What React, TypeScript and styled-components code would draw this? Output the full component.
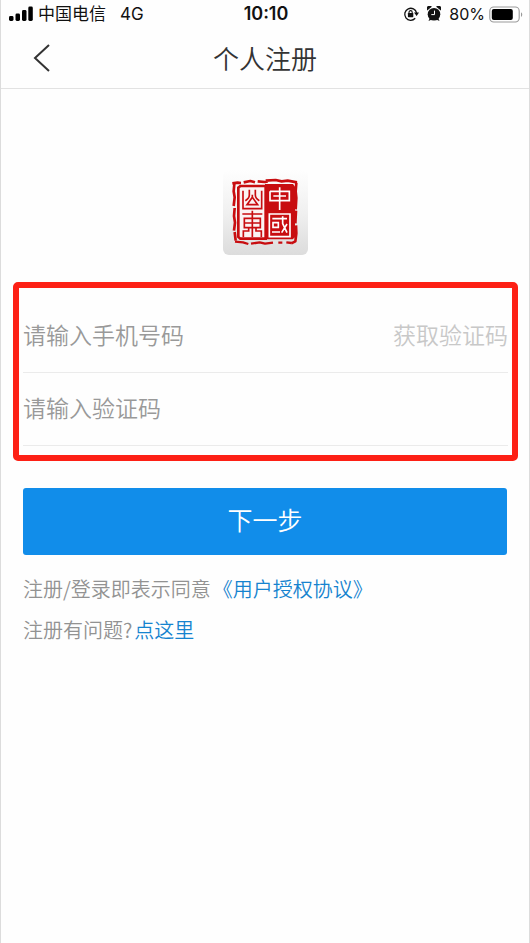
import React from "react";
import styled, { createGlobalStyle } from "styled-components";

const Global = createGlobalStyle`
  * { box-sizing: border-box; }
  body { margin: 0; background: #fff; font-family: "Noto Sans CJK SC", sans-serif; }
  button, input { font: inherit; }
`;

const Screen = styled.div`
  min-height: 100vh;
  background: #fefefe;
  border: solid #dcdcdc;
  border-width: 0 1px;
`;

const StatusBar = styled.div`
  display: grid;
  grid-template-columns: 1fr auto 1fr;
  align-items: center;
  height: 28px;
  padding: 0 6px 0 8px;
  color: #111;
  font-family: Inter, "Noto Sans CJK SC", sans-serif;
  font-size: 17px;
  line-height: 24px;
`;

const StatusGroup = styled.div<{ $end?: boolean }>`
  display: flex;
  align-items: center;
  justify-content: ${(p) => (p.$end ? "flex-end" : "flex-start")};
  gap: ${(p) => (p.$end ? "4px" : "5px")};
`;

const Network = styled.span`
  margin-left: 9px;
`;

const Percent = styled.span`
  font-size: 16px;
`;

const Clock = styled.time`
  font-size: 18px;
  font-weight: 600;
`;

const AlarmSvg = styled.svg`
  margin: 0 4px;
`;

const Header = styled.header`
  display: grid;
  grid-template-columns: 82px 1fr 82px;
  align-items: center;
  height: 61px;
  border-bottom: 1px solid #e2e2e2;
`;

const BackButton = styled.button`
  display: flex;
  justify-content: center;
  padding: 0;
  border: 0;
  background: none;
  color: #333;
`;

const Title = styled.h1`
  margin: 0;
  color: #333;
  font-size: 26px;
  font-weight: 350;
  line-height: 40px;
  text-align: center;
`;

const LogoArea = styled.div`
  display: flex;
  justify-content: center;
  padding: 81px 0 27px;
`;

const Fields = styled.div`
  margin: 0 11px 0 12px;
  padding: 12px 4px 9px;
  border: 6px solid #fd2015;
  border-radius: 5px;
`;

const FieldRow = styled.div`
  display: flex;
  align-items: center;
  height: 73px;
  padding-bottom: 5px;
  border-bottom: 1px solid #ebebeb;
  font-size: 23px;
  font-weight: 350;
`;

const TextInput = styled.input`
  flex: 1;
  min-width: 0;
  height: 40px;
  padding: 0;
  border: 0;
  outline: 0;
  background: none;
  color: #333;
  &::placeholder { color: #999; opacity: 1; }
`;

const CodeButton = styled.button`
  padding: 0;
  border: 0;
  background: none;
  color: #c8c8c8;
`;

const Actions = styled.div`
  padding: 27px 22px 0;
`;

const NextButton = styled.button`
  width: 100%;
  height: 67px;
  padding: 0 0 5px;
  border: 0;
  border-radius: 3px;
  background: #118dea;
  color: #fff;
  font-size: 25px;
  font-weight: 350;
`;

const Note = styled.p<{ $first?: boolean }>`
  margin: ${(p) => (p.$first ? "13px" : "0")} 0 0;
  color: #929292;
  font-size: 20px;
  font-weight: 350;
  line-height: 41px;
`;

const Link = styled.a`
  margin-left: 2px;
  color: #1583cf;
  text-decoration: none;
`;

const Signal = () => (
  <svg width="24" height="16" viewBox="0 0 24 16" fill="#000" aria-hidden="true">
    <rect x="0" y="10" width="4.5" height="5" rx="1.4" />
    <rect x="6.5" y="7.5" width="4.5" height="7.5" rx="1.4" />
    <rect x="13" y="4" width="4.5" height="11" rx="1.4" />
    <rect x="19.3" y="0.5" width="4.5" height="14.5" rx="1.4" />
  </svg>
);

const RotationLock = () => (
  <svg width="16" height="16" viewBox="0 0 16 16" fill="none" stroke="#111" aria-hidden="true">
    <path d="M12.2 12.3A6 6 0 1 1 13.6 7" strokeWidth="1.3" />
    <path d="M11 6.6h5l-2.4 3.4z" fill="#111" stroke="none" />
    <rect x="4.9" y="7" width="5.4" height="4.2" rx=".6" fill="#111" stroke="none" />
    <path d="M6 7.5V6.2a1.6 1.6 0 0 1 3.2 0v1.3" strokeWidth="1.1" />
  </svg>
);

const Alarm = () => (
  <AlarmSvg width="14" height="16" viewBox="0 0 14 16" aria-hidden="true">
    <circle cx="7" cy="8.2" r="6.3" fill="#111" />
    <path d="M.2 4.4A2.9 2.9 0 0 1 4.8.8zM13.8 4.4A2.9 2.9 0 0 0 9.2.8zM1.5 15l1.5-3.5 2.4 1.8zM12.5 15l-1.5-3.5-2.4 1.8z" fill="#111" />
    <path d="M7.5 4.6v4H4.3" fill="none" stroke="#fff" strokeWidth="1" />
  </AlarmSvg>
);

const Battery = () => (
  <svg width="34" height="17" viewBox="0 0 34 17" aria-hidden="true">
    <rect x=".8" y="1" width="29.4" height="15" rx="4" fill="none" stroke="#999" strokeWidth="1.1" />
    <rect x="2.8" y="3" width="21" height="11" rx="2" fill="#000" />
    <path d="M32 6.2c1.7.8 1.7 4 0 4.8z" fill="#999" />
  </svg>
);

const BackIcon = () => (
  <svg width="18" height="30" viewBox="0 0 18 30" fill="none" stroke="currentColor" strokeWidth="2" aria-hidden="true">
    <path d="M16 2L2 15l14 13" />
  </svg>
);

const SealLogo = () => (
  <svg width="85" height="85" viewBox="22 -2 255 255" role="img" aria-label="中国山东">
    <defs>
      <linearGradient id="tile" x1="0" y1="0" x2="0" y2="1">
        <stop offset="0" stopColor="#fefefe" />
        <stop offset=".5" stopColor="#f0f0f0" />
        <stop offset="1" stopColor="#dcdcdc" />
      </linearGradient>
    </defs>
    <rect x="22" y="-2" width="255" height="255" rx="18" fill="url(#tile)" />
    <g fill="none" stroke="#c80d10" strokeLinejoin="round">
      <path d="M50 38l16-2 10 1M84 35l20-4 14 4M126 32l22 2 8-2M150 30l30-2 18 4 18-2 28 5" strokeWidth="8" />
      <path d="M56 40l-2 22 3 18-3 26M57 112l-2 24 3 20-3 24M57 184l3 26" strokeWidth="8" />
      <path d="M242 36l-2 26 2 20-2 34M241 120l-2 38M241 164l1 24-3 24-12 6" strokeWidth="8" />
      <path d="M58 213l24 2 16 5M106 219l26-4 16 4 24-3M188 216l12 0M212 215l16 2" strokeWidth="7" />
    </g>
    <path d="M148 40h84l6 8v152l-7 6h-83z" fill="#c80d10" />
    <path d="M150 46H74l-6 5v148l6 5h76z" fill="#fbf3f3" stroke="#c80d10" strokeWidth="8" />
    <g fill="none" stroke="#c80d10" strokeWidth="5">
      <path d="M82 60v54h56V60M101 57v16q0 10-12 17M119 57v16q0 10 12 17M110 72v8l-16 22h32l-16-22" />
      <path d="M80 130h60M110 120v80M86 143h48v28H86zM86 157h48M99 171v10H83v18M121 171v10h16v18" />
    </g>
    <g fill="none" stroke="#fff" strokeWidth="5">
      <path d="M163 62v28h58V62h-58M192 50v68M173 76h38" />
      <path d="M161 130h62v68h-62zM170 144h44M172 156h16v14h-16zM169 184h24M201 137v22l13 27M214 160l-16 26" />
    </g>
  </svg>
);

export default function App() {
  return (
    <Screen>
      <Global />
      <StatusBar>
        <StatusGroup>
          <Signal />
          <span>中国电信</span>
          <Network>4G</Network>
        </StatusGroup>
        <Clock>10:10</Clock>
        <StatusGroup $end>
          <RotationLock />
          <Alarm />
          <Percent>80%</Percent>
          <Battery />
        </StatusGroup>
      </StatusBar>
      <Header>
        <BackButton type="button" aria-label="返回">
          <BackIcon />
        </BackButton>
        <Title>个人注册</Title>
      </Header>
      <main>
        <LogoArea>
          <SealLogo />
        </LogoArea>
        <form onSubmit={(e) => e.preventDefault()}>
          <Fields>
            <FieldRow>
              <TextInput type="tel" aria-label="手机号码" placeholder="请输入手机号码" />
              <CodeButton type="button">获取验证码</CodeButton>
            </FieldRow>
            <FieldRow>
              <TextInput type="text" aria-label="验证码" placeholder="请输入验证码" />
            </FieldRow>
          </Fields>
          <Actions>
            <NextButton type="submit">下一步</NextButton>
            <Note $first>
              注册/登录即表示同意<Link href="#agreement">《用户授权协议》</Link>
            </Note>
            <Note>
              注册有问题?<Link href="#help">点这里</Link>
            </Note>
          </Actions>
        </form>
      </main>
    </Screen>
  );
}
